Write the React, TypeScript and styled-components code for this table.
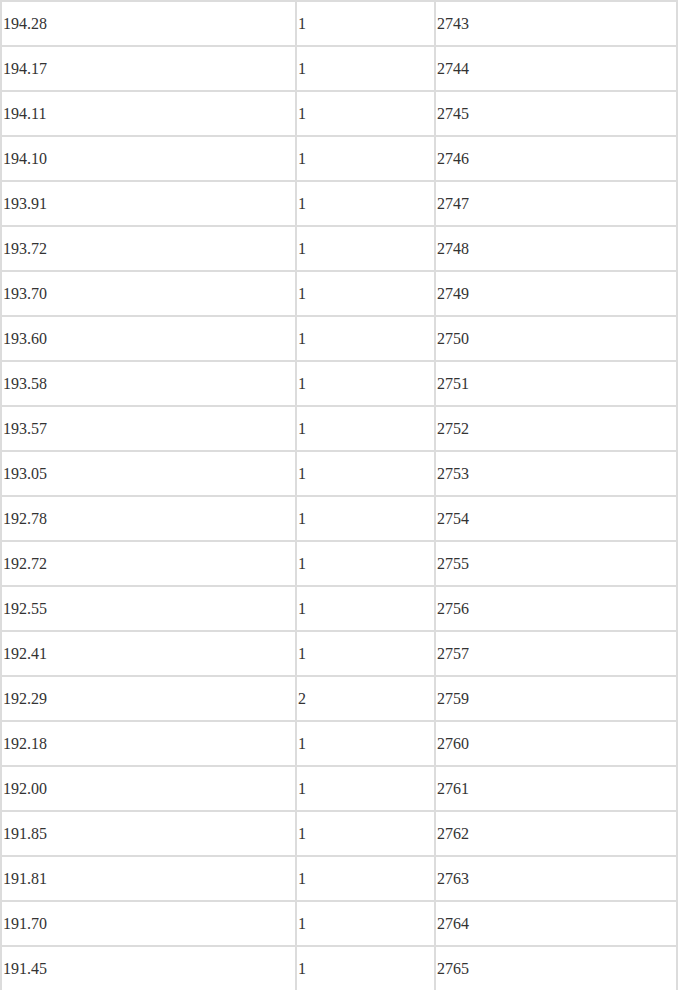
import React from 'react';
import styled, { createGlobalStyle } from 'styled-components';

const GlobalStyle = createGlobalStyle`
  html, body {
    margin: 0;
    padding: 0;
    background: #fff;
  }
`;

const LINE = '#dcdcdc';

const Table = styled.div`
  width: 678px;
  border-top: 2px solid ${LINE};
  font-family: 'Liberation Serif', 'Noto Sans CJK SC', serif;
  font-size: 16px;
  color: #333;
`;

const Row = styled.div`
  display: grid;
  grid-template-columns: 293px 137px 240px;
  column-gap: 2px;
  height: 43px;
  border-left: 2px solid ${LINE};
  border-right: 2px solid ${LINE};
  border-bottom: 2px solid ${LINE};
  background: ${LINE};
`;

const Cell = styled.div`
  display: flex;
  align-items: center;
  padding-left: 1px;
  background: #fff;
  white-space: nowrap;
`;

const rows: [string, string, string][] = [
  ['194.28', '1', '2743'],
  ['194.17', '1', '2744'],
  ['194.11', '1', '2745'],
  ['194.10', '1', '2746'],
  ['193.91', '1', '2747'],
  ['193.72', '1', '2748'],
  ['193.70', '1', '2749'],
  ['193.60', '1', '2750'],
  ['193.58', '1', '2751'],
  ['193.57', '1', '2752'],
  ['193.05', '1', '2753'],
  ['192.78', '1', '2754'],
  ['192.72', '1', '2755'],
  ['192.55', '1', '2756'],
  ['192.41', '1', '2757'],
  ['192.29', '2', '2759'],
  ['192.18', '1', '2760'],
  ['192.00', '1', '2761'],
  ['191.85', '1', '2762'],
  ['191.81', '1', '2763'],
  ['191.70', '1', '2764'],
  ['191.45', '1', '2765'],
];

const App: React.FC = () => (
  <>
    <GlobalStyle />
    <Table>
      {rows.map(([score, count, rank]) => (
        <Row key={rank}>
          <Cell>{score}</Cell>
          <Cell>{count}</Cell>
          <Cell>{rank}</Cell>
        </Row>
      ))}
    </Table>
  </>
);

export default App;
